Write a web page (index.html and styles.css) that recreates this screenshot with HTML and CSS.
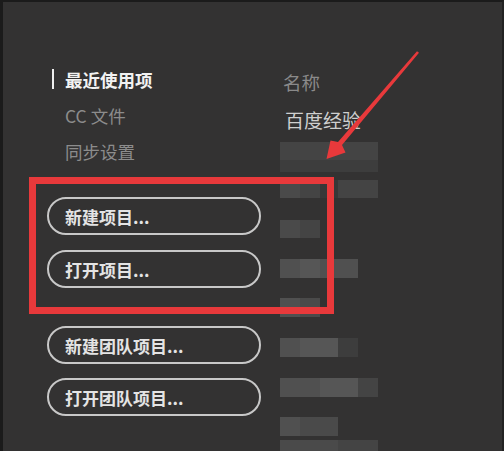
FILE: index.html
```html
<!DOCTYPE html>
<html lang="zh-CN">
<head>
    <meta charset="utf-8">
    <title>开始</title>
    <link rel="stylesheet" href="styles.css">
</head>
<body>
  <div class="page">
        <div class="side">
            <ul class="nav">
                <li class="nav_item active">最近使用项</li>
                <li class="nav_item">CC 文件</li>
                <li class="nav_item">同步设置</li>
            </ul>
            <div class="btn_group">
                <button class="pill">新建项目...</button>
                <button class="pill">打开项目...</button>
            </div>
            <div class="btn_group team">
                <button class="pill">新建团队项目...</button>
                <button class="pill">打开团队项目...</button>
            </div>
        </div>

        <div class="recent">
            <div class="col_head">名称</div>
            <div class="file_name">百度经验</div>
            <div class="blur">
                <div class="row r1"><span class="s2 w98"></span></div>
                <div class="row r2"><span class="s1 w98"></span></div>
                <div class="row r3"><span class="s3 w20"></span><span class="s2 w20"></span><span class="s0 w18"></span><span class="s2 w40"></span></div>
                <div class="row r4"><span class="s3 w20"></span><span class="s2 w20"></span></div>
                <div class="row r5"><span class="s4 w20"></span><span class="s5 w20"></span><span class="s4 w38"></span></div>
                <div class="row r6"><span class="s4 w20"></span><span class="s3 w20"></span></div>
                <div class="row r7"><span class="s4 w20"></span><span class="s5 w38"></span><span class="s1 w20"></span></div>
                <div class="row r8"><span class="s4 w40"></span><span class="s5 w38"></span><span class="s2 w20"></span></div>
                <div class="row r9"><span class="s4 w20"></span><span class="s3 w38"></span></div>
                <div class="row r10"><span class="s3 w58"></span><span class="s2 w40"></span></div>
            </div>
        </div>

        <!-- annotation drawn over the screen -->
        <div class="mark_box"></div>
        <svg class="mark_arrow" width="504" height="451" viewBox="0 0 504 451">
            <polygon fill="#e8393b" points="417,51.2 419,52.8 342,145 345.5,152.5 326.5,159 330.5,140.5 338,142"/>
        </svg>
  </div>
</body>
</html>
```

FILE: styles.css
```css
*{
    margin: 0;
    padding: 0;
    box-sizing: border-box;
}
body{
    background-color: #333232;
    font-family: "Noto Sans CJK SC", "Noto Sans", sans-serif;
}
.page{
    position: relative;
    height: 451px;
    overflow: hidden;
    display: grid;
    grid-template-columns: 258px 1fr;
    border-top: 2px solid #1b1b1b;
    border-left: 3px solid #1b1b1b;
    border-right: 2px solid #222;
}
.side{
    padding-left: 44px;
    padding-top: 59px;
}
.nav{
    list-style: none;
    padding-left: 5px;
}
.nav_item{
    display: flex;
    align-items: center;
    height: 36px;
    padding-left: 13px;
    font-size: 17.5px;
    color: #8c8c8c;
}
.nav_item.active{
    padding-left: 0;
    color: #f2f2f2;
    font-weight: 700;
}
.nav_item.active::before{
    content: "";
    width: 2px;
    height: 20px;
    margin-right: 11px;
    background-color: #eeeeee;
}
.btn_group{
    display: flex;
    flex-direction: column;
    gap: 15px;
    margin-top: 28px;
}
.btn_group.team{
    gap: 14px;
    margin-top: 38px;
}
.pill{
    width: 214px;
    height: 38px;
    border: 2px solid #c8c8c8;
    border-radius: 19px;
    background-color: transparent;
    color: #e4e4e4;
    font-family: "Noto Sans CJK SC", sans-serif;
    font-size: 17px;
    font-weight: 700;
    text-align: left;
    padding-left: 16px;
}
.recent{
    padding-top: 61px;
    padding-left: 19px;
}
.col_head{
    height: 38px;
    line-height: 38px;
    padding-left: 3px;
    font-size: 18.5px;
    color: #8a8a8a;
}
.file_name{
    height: 41px;
    line-height: 38px;
    padding-left: 5px;
    font-size: 19px;
    color: #cfcfcf;
}
.row{
    display: flex;
    height: 18px;
}
.row span{
    height: 100%;
}
.r2{ height: 12px; }
.r3{ margin-top: 8px; }
.r4{ margin-top: 22px; }
.r5{ margin-top: 21px; height: 19px; }
.r6{ margin-top: 20px; height: 19px; }
.r7{ margin-top: 21px; height: 19px; }
.r8{ margin-top: 21px; height: 19px; }
.r9{ margin-top: 20px; height: 19px; }
.r10{ margin-top: 4px; height: 12px; }
.s0{ background-color: #383838; }
.s1{ background-color: #3d3d3d; }
.s2{ background-color: #444444; }
.s3{ background-color: #4a4a4a; }
.s4{ background-color: #505050; }
.s5{ background-color: #565656; }
.w18{ width: 18px; }
.w20{ width: 20px; }
.w38{ width: 38px; }
.w40{ width: 40px; }
.w58{ width: 58px; }
.w98{ width: 98px; }

.mark_box{
    position: absolute;
    left: 26px;
    top: 175px;
    width: 305px;
    height: 137px;
    border: 7px solid #e8393b;
}
.mark_arrow{
    position: absolute;
    left: -3px;
    top: -2px;
}
```
